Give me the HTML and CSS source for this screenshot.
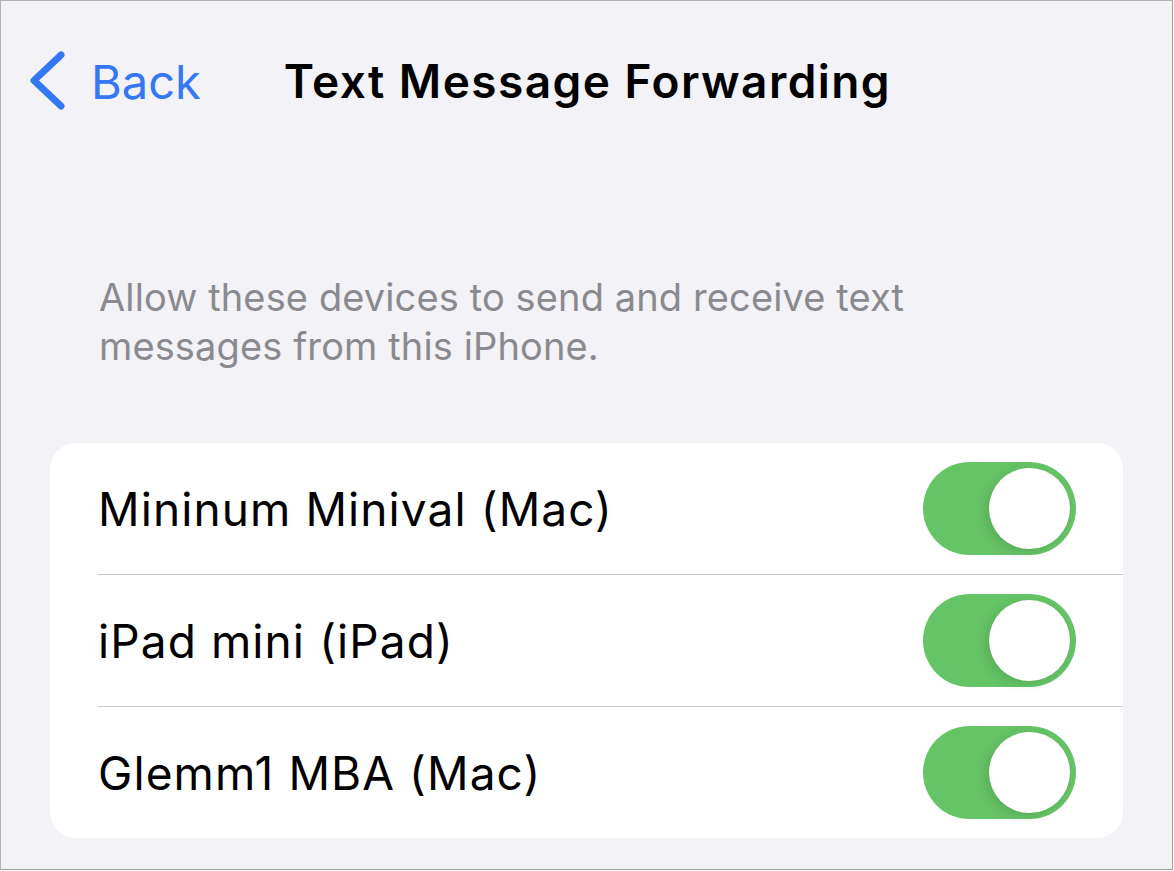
FILE: index.html
```html
<!DOCTYPE html>
<html lang="en">
<head>
<meta charset="utf-8">
<title>Text Message Forwarding</title>
<link rel="stylesheet" href="styles.css">
</head>
<body>
<div class="frame">
  <header class="nav">
    <a class="back" href="#">
      <svg class="chevron" width="40" height="64" viewBox="0 0 40 64" aria-hidden="true">
        <polyline points="31,6 4,31.5 31,57" fill="none" stroke="#3478f6" stroke-width="7" stroke-linecap="round" stroke-linejoin="round"/>
      </svg>
      <span class="back-label">Back</span>
    </a>
    <h1 class="title">Text Message Forwarding</h1>
  </header>

  <p class="footnote">Allow these devices to send and receive text messages from this iPhone.</p>

  <ul class="card">
    <li class="row">
      <span class="row-label">Mininum Minival (Mac)</span>
      <span class="toggle"><span class="knob"></span></span>
    </li>
    <li class="row">
      <span class="row-label">iPad mini (iPad)</span>
      <span class="toggle"><span class="knob"></span></span>
    </li>
    <li class="row">
      <span class="row-label">Glemm1 MBA (Mac)</span>
      <span class="toggle"><span class="knob"></span></span>
    </li>
  </ul>
</div>
</body>
</html>
```

FILE: styles.css
```css
html, body {
  margin: 0;
  padding: 0;
  background: #ffffff;
}

body {
  font-family: "Inter", "Noto Sans", "Liberation Sans", sans-serif;
  -webkit-font-smoothing: antialiased;
}

.frame {
  box-sizing: border-box;
  width: 1173px;
  height: 870px;
  border: 1px solid #b4b4b4;
  border-right-color: #a0a0a0;
  border-bottom-color: #a0a0a0;
  background: #f2f2f7;
  overflow: hidden;
}

.nav {
  display: flex;
  align-items: center;
  height: 160px;
  padding-left: 29px;
}

.back {
  display: flex;
  align-items: center;
  text-decoration: none;
  color: #3478f6;
}

.chevron {
  display: block;
}

.back-label {
  margin-left: 21px;
  font-size: 47px;
  font-weight: 400;
  letter-spacing: 0;
}

.title {
  margin: 0 0 0 83px;
  font-size: 46px;
  font-weight: 600;
  color: #000;
  letter-spacing: 1.45px;
}

.footnote {
  margin: 112px 0 0 0;
  padding: 0 250px 0 98px;
  font-size: 38px;
  line-height: 49px;
  color: #8a8a8e;
  letter-spacing: 0.12px;
}

.card {
  list-style: none;
  margin: 72px 49px 0 49px;
  padding: 0;
  background: #ffffff;
  border-radius: 26px;
  overflow: hidden;
}

.row {
  display: flex;
  align-items: center;
  justify-content: space-between;
  height: 131px;
  margin-left: 48px;
  padding-right: 47px;
  border-bottom: 1px solid #c8c8cc;
}

.row:last-child {
  border-bottom: none;
}

.row-label {
  font-size: 46px;
  color: #000;
  letter-spacing: 1.1px;
}

.toggle {
  position: relative;
  width: 153px;
  height: 93px;
  border-radius: 47px;
  background: #65c466;
  flex-shrink: 0;
}

.knob {
  position: absolute;
  top: 6px;
  right: 6px;
  width: 81px;
  height: 81px;
  border-radius: 50%;
  background: #ffffff;
  box-shadow: -4px 3px 12px rgba(0, 0, 0, 0.12), 0 0 1px rgba(0, 0, 0, 0.04);
}
```
